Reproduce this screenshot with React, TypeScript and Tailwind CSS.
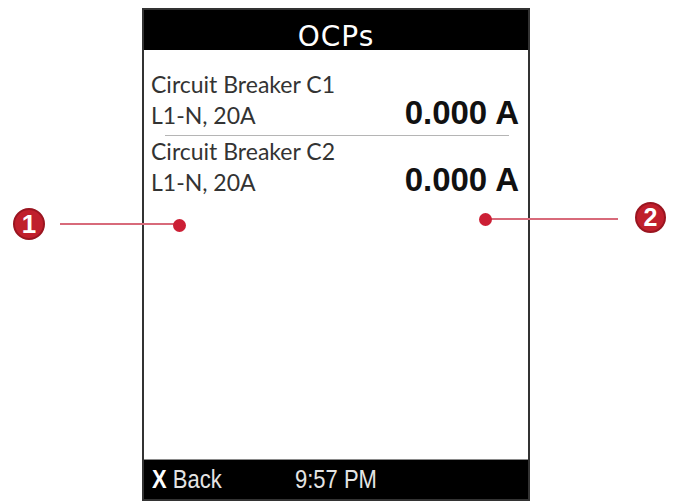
import React from "react";

function Row({ name, sub, value }: { name: string; sub: string; value: string }) {
  return (
    <div className="flex flex-col">
      <div
        className="text-[23px] leading-[31px] text-[#333333]"
        style={{ fontFamily: "Lato, 'Open Sans', sans-serif" }}
      >
        {name}
      </div>
      <div className="flex items-baseline justify-between">
        <span
          className="text-[23px] leading-[31px] text-[#333333]"
          style={{ fontFamily: "Lato, 'Open Sans', sans-serif" }}
        >
          {sub}
        </span>
        <span
          className="text-[33px] leading-[26px] font-bold text-[#111111]"
          style={{ fontFamily: "'Liberation Sans', Arial, sans-serif" }}
        >
          {value}
        </span>
      </div>
    </div>
  );
}

export default function App() {
  return (
    <div className="relative w-[673px] h-[503px] bg-white overflow-hidden">
      <div className="ml-[142px] mt-[8px] w-[388px] h-[493px] border-2 border-[#333333] flex flex-col bg-white">
        <div
          className="h-[40px] bg-black flex justify-center pt-[13px] text-[28px] leading-[28px] text-white tracking-[1px]"
          style={{ fontFamily: "'DejaVu Sans', Verdana, sans-serif" }}
        >
          OCPs
        </div>
        <div className="flex-1 flex flex-col pl-[7px] pr-[9px] pt-[19px]">
          <Row name="Circuit Breaker C1" sub="L1-N, 20A" value="0.000 A" />
          <div className="mt-[4px] ml-[14px] mr-[10px] h-[1px] bg-[#b5b5b5]" />
          <Row name="Circuit Breaker C2" sub="L1-N, 20A" value="0.000 A" />
        </div>
        <div
          className="h-[40px] bg-black border-t border-[#8a8a8a] flex items-start pl-[8px] text-[25px] leading-[39px] text-[#e4e4e4]"
          style={{ fontFamily: "'Liberation Sans', Arial, sans-serif" }}
        >
          <span className="inline-block origin-left scale-x-[0.88] whitespace-nowrap">
            <span className="font-bold text-white">X</span> Back
          </span>
          <span className="inline-block origin-left scale-x-[0.88] whitespace-nowrap ml-[64px]">
            9:57 PM
          </span>
        </div>
      </div>

      {/* Annotation 1 */}
      <div className="absolute left-[60px] top-[223px] w-[120px] h-[2px] bg-[#d86a7a]" />
      <div className="absolute left-[173px] top-[219px] w-[13px] h-[13px] rounded-full bg-[#cc1f35]" />
      <div
        className="absolute left-[13px] top-[208px] w-[32px] h-[32px] rounded-full bg-[#c01f2c] border-2 border-[#9a1520] flex items-center justify-center text-white font-bold text-[26px] leading-none"
        style={{ fontFamily: "'Liberation Sans', Arial, sans-serif" }}
      >
        1
      </div>

      {/* Annotation 2 */}
      <div className="absolute left-[485px] top-[218px] w-[133px] h-[2px] bg-[#d86a7a]" />
      <div className="absolute left-[479px] top-[213px] w-[13px] h-[13px] rounded-full bg-[#cc1f35]" />
      <div
        className="absolute left-[635px] top-[202px] w-[31px] h-[31px] rounded-full bg-[#c01f2c] border-2 border-[#9a1520] flex items-center justify-center text-white font-bold text-[25px] leading-none"
        style={{ fontFamily: "'Liberation Sans', Arial, sans-serif" }}
      >
        2
      </div>
    </div>
  );
}
